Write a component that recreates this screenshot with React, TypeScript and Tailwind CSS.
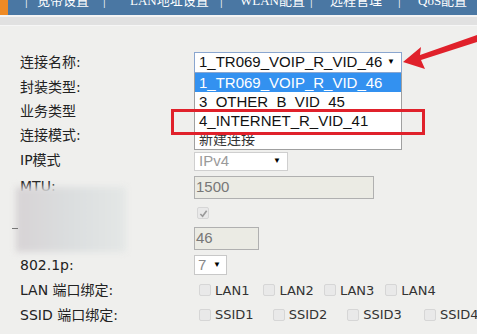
import { ReactNode } from "react";

const navItems = [
  { text: "宽带设置", w: "w-[66px]", sep: "w-[12px]" },
  { text: "LAN地址设置", w: "w-[90px]", sep: "w-[27px]" },
  { text: "WLAN配置", w: "w-[70px]", sep: "w-[20px]" },
  { text: "远程管理", w: "w-[68px]", sep: "w-[20px]" },
  { text: "QoS配置", w: "w-[60px]", sep: "w-[20px]" },
];

const labelFont = { fontFamily: '"DejaVu Sans", "Noto Sans CJK SC", sans-serif' };
const ctrlFont = { fontFamily: '"Liberation Sans", "Noto Sans CJK SC", sans-serif' };

function Row({ label, h, children }: { label: string; h: string; children?: ReactNode }) {
  return (
    <div className={`flex items-center ${h}`}>
      <div className="w-[194px] shrink-0 pl-[20px] text-[14px] leading-none text-[#222]" style={labelFont}>
        {label}
      </div>
      {children}
    </div>
  );
}

function Caret() {
  return <span className="text-[8px] leading-none text-black">▼</span>;
}

function Box({ checked = false }: { checked?: boolean }) {
  return (
    <span className="inline-flex h-[12px] w-[12px] shrink-0 items-center justify-center rounded-[2px] border border-[#d6d6d6] bg-[#e9e9e9]">
      {checked && (
        <svg width="9" height="9" viewBox="0 0 10 10">
          <path d="M1.5 5.5 L4 8 L8.5 2" stroke="#9a9a9a" strokeWidth="1.8" fill="none" />
        </svg>
      )}
    </span>
  );
}

function Check({ text, gap }: { text: string; gap: string }) {
  return (
    <span className={`flex items-center ${gap}`}>
      <Box />
      <span className="ml-[4px] text-[13px] leading-none text-[#333]" style={labelFont}>
        {text}
      </span>
    </span>
  );
}

export default function App() {
  return (
    <div className="relative h-[334px] w-[477px] overflow-hidden bg-[#efefed]">
      <header>
        <div className="flex h-[15px] items-start bg-[#4a77a3]">
          <div className="h-full w-[8px] shrink-0 bg-[#ee8a25]" />
          <div className="w-[17px] shrink-0" />
          <div className="flex h-full overflow-hidden text-[13px] leading-none text-white" style={{ fontFamily: '"Liberation Serif", "Noto Sans CJK SC", serif' }}>
            {navItems.map((n) => (
              <div key={n.text} className="-mt-[6px] flex shrink-0">
                <span className={`${n.sep} shrink-0`}>|</span>
                <span className={`${n.w} shrink-0 whitespace-nowrap`}>{n.text}</span>
              </div>
            ))}
          </div>
        </div>
        <div className="h-[2px] bg-[#f4f4f4]" />
        <div className="h-[8px] bg-[#e1e1e1]" />
        <div className="h-[1px] bg-[#f6f6f6]" />
      </header>

      <main className="pt-[24px]">
        <Row label="连接名称:" h="h-[24px]">
          <div className="relative">
            <div className="flex h-[21px] w-[208px] items-center justify-between border border-[#8aa6cf] bg-white pl-[4px] pr-[6px] text-[15px] text-[#111]" style={ctrlFont}>
              <span>1_TR069_VOIP_R_VID_46</span>
              <Caret />
            </div>
            <ul className="absolute left-0 top-[21px] z-10 w-[208px] border border-t-0 border-[#a0a0a0] bg-white text-[15px] leading-[19px] text-[#111]" style={ctrlFont}>
              <li className="bg-[#3391f0] pl-[4px] text-white">1_TR069_VOIP_R_VID_46</li>
              <li className="pl-[4px]">3_OTHER_B_VID_45</li>
              <li className="pl-[4px]">4_INTERNET_R_VID_41</li>
              <li className="pl-[4px] text-[14px] text-[#333]">新建连接</li>
            </ul>
          </div>
        </Row>
        <Row label="封装类型:" h="h-[25px]" />
        <Row label="业务类型" h="h-[24px]" />
        <Row label="连接模式:" h="h-[24px]" />
        <Row label="IP模式" h="h-[25px]">
          <div className="mt-[3px] flex h-[19px] w-[94px] items-center justify-between border border-[#cfcfcf] bg-white pl-[4px] pr-[6px] text-[15px] text-[#9a9a9a]" style={ctrlFont}>
            <span>IPv4</span>
            <Caret />
          </div>
        </Row>
        <Row label="MTU:" h="h-[27px]">
          <div className="mt-[3px] flex h-[23px] w-[180px] items-center border border-[#b0b0b0] bg-[#ebebe4] pl-[1px] text-[15px] text-[#777]" style={ctrlFont}>
            1500
          </div>
        </Row>
        <Row label="" h="h-[25px]">
          <span className="ml-[3px]">
            <Box checked />
          </span>
        </Row>
        <Row label="" h="h-[28px]">
          <div className="flex h-[23px] w-[65px] items-center border border-[#b0b0b0] bg-[#ebebe4] pl-[1px] text-[15px] text-[#777]" style={ctrlFont}>
            46
          </div>
        </Row>
        <Row label="802.1p:" h="h-[26px]">
          <div className="flex h-[20px] w-[33px] items-center justify-between border border-[#c8c8c8] bg-white pl-[3px] pr-[5px] text-[15px] text-[#888]" style={ctrlFont}>
            <span>7</span>
            <Caret />
          </div>
        </Row>
        <Row label="LAN 端口绑定:" h="h-[24px]">
          <div className="ml-[5px] flex">
            <Check text="LAN1" gap="" />
            <Check text="LAN2" gap="ml-[14px]" />
            <Check text="LAN3" gap="ml-[10px]" />
            <Check text="LAN4" gap="ml-[11px]" />
          </div>
        </Row>
        <Row label="SSID 端口绑定:" h="h-[25px]">
          <div className="ml-[5px] flex">
            <Check text="SSID1" gap="" />
            <Check text="SSID2" gap="ml-[19px]" />
            <Check text="SSID3" gap="ml-[20px]" />
            <Check text="SSID4" gap="ml-[22px]" />
          </div>
        </Row>
      </main>

      {/* blurred patch */}
      <div className="absolute left-[16px] top-[187px] h-[65px] w-[110px] bg-gradient-to-r from-[#d7d3d5] via-[#dbdedf] to-[#e4e7e6] blur-[3px]" />
      <div className="absolute left-[12px] top-[228px] h-[1px] w-[6px] bg-[#777]" />

      {/* red annotation box */}
      <div className="absolute left-[171px] top-[109px] z-20 h-[26px] w-[254px] border-[3px] border-[#e0212b]" />

      {/* red arrow */}
      <svg className="absolute left-[400px] top-[30px] z-20" width="77" height="45" viewBox="400 30 77 45">
        <polygon points="403,62 421,47 420,55 477,35 477,42 421,60 425,69" fill="#e0212b" />
      </svg>
    </div>
  );
}
